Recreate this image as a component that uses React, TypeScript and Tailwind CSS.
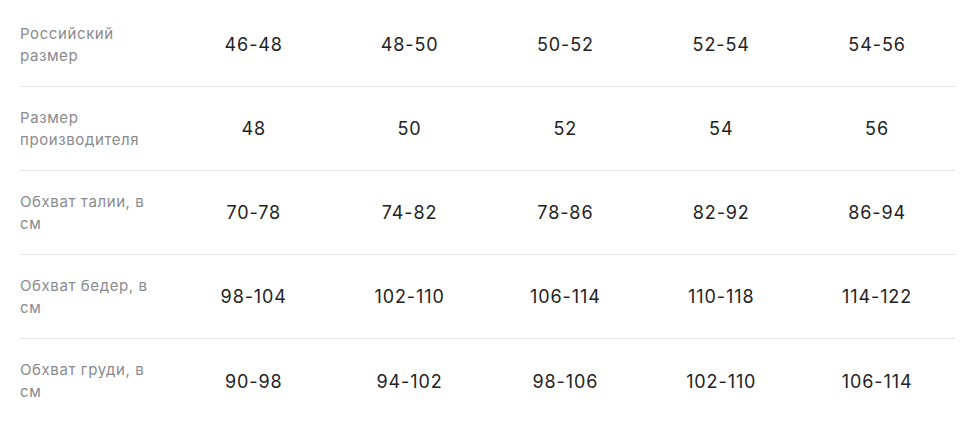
const labels = [
  'Российский размер',
  'Размер производителя',
  'Обхват талии, в см',
  'Обхват бедер, в см',
  'Обхват груди, в см',
];

const rows: string[][] = [
  ['46-48', '48-50', '50-52', '52-54', '54-56'],
  ['48', '50', '52', '54', '56'],
  ['70-78', '74-82', '78-86', '82-92', '86-94'],
  ['98-104', '102-110', '106-114', '110-118', '114-122'],
  ['90-98', '94-102', '98-106', '102-110', '106-114'],
];

export default function App() {
  return (
    <main className="min-h-screen bg-white pt-[3px] pl-[20px] pr-[5px] font-['Inter',sans-serif]">
      {rows.map((values, i) => (
        <div
          key={labels[i]}
          className={`grid grid-cols-6 items-center h-[84px] ${
            i < rows.length - 1 ? 'border-b border-[#e6e6e8]' : ''
          }`}
        >
          <div className="text-[15px] leading-[22px] tracking-[0.04em] text-[#8a8a8f] pr-4">
            {labels[i]}
          </div>
          {values.map(v => (
            <div key={v} className="text-center text-[18px] tracking-[0.05em] text-[#222224]">
              {v}
            </div>
          ))}
        </div>
      ))}
    </main>
  );
}
